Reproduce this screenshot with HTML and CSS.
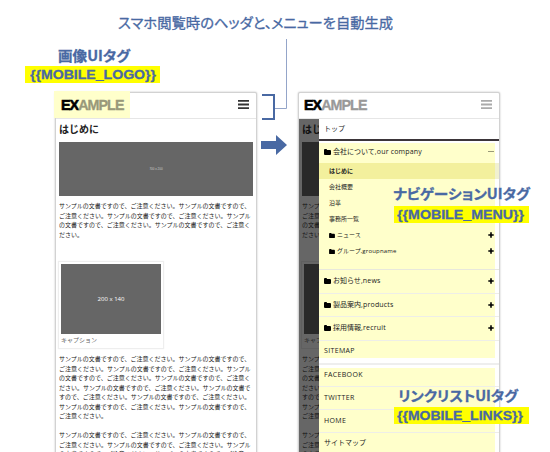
FILE: index.html
```html
<!DOCTYPE html>
<html lang="ja">
<head>
<meta charset="utf-8">
<title>スマホ閲覧時のヘッダとメニュー</title>
<link rel="stylesheet" href="styles.css">
</head>
<body>
<svg class="defs" width="0" height="0">
  <symbol id="folder" viewBox="0 0 14 12"><path d="M0 2Q0 0 2 0H4.500Q6 0 6 2H12Q14 2 14 4V10Q14 12 12 12H2Q0 12 0 10Z"/></symbol>
  <symbol id="plus" viewBox="0 0 6 6"><path d="M2.200 0.300H3.800V2.200H5.700V3.800H3.800V5.700H2.200V3.800H0.300V2.200H2.200Z"/></symbol>
  <symbol id="bars" viewBox="0 0 11 9"><path d="M0 0H11V1.800H0ZM0 3.600H11V5.400H0ZM0 7.200H11V9H0Z"/></symbol>
</svg>
<main class="stage">
  <section class="phone">
    <header class="bar">
      <div class="logo marked"><svg width="76" height="27"><text x="7" y="19" textLength="62.500" lengthAdjust="spacingAndGlyphs"><tspan class="ex">EX</tspan><tspan class="ample">AMPLE</tspan></text></svg></div>
      <svg class="bars"><use href="#bars"/></svg>
    </header>
    <article class="page">
      <h1>はじめに</h1>
      <div class="hero">700 x 200</div>
      <p class="intro">サンプルの文書ですので、ご注意ください。サンプルの文書ですので、<br>ご注意ください。サンプルの文書ですので、ご注意ください。サンプル<br>の文書ですので、ご注意ください。サンプルの文書ですので、ご注意く<br>ださい。</p>
      <figure><div class="thumb">200 x 140</div><figcaption>キャプション</figcaption></figure>
      <p>サンプルの文書ですので、ご注意ください。サンプルの文書ですので、<br>ご注意ください。サンプルの文書ですので、ご注意ください。サンプル<br>の文書ですので、ご注意ください。サンプルの文書ですので、ご注意く<br>ださい。サンプルの文書ですので、ご注意ください。サンプルの文書で<br>すので、ご注意ください。サンプルの文書ですので、ご注意ください。<br>サンプルの文書ですので、ご注意ください。サンプルの文書ですので、<br>ご注意ください。</p>
      <p>サンプルの文書ですので、ご注意ください。サンプルの文書ですので、<br>ご注意ください。サンプルの文書ですので、ご注意ください。サンプル<br>の文書ですので、ご注意ください。サンプルの文書ですので、ご注意く</p>
    </article>
  </section>

  <section class="phone open">
    <header class="bar">
      <div class="logo"><svg width="76" height="27"><text x="7" y="19" textLength="62.500" lengthAdjust="spacingAndGlyphs"><tspan class="ex">EX</tspan><tspan class="ample">AMPLE</tspan></text></svg></div>
      <svg class="bars"><use href="#bars"/></svg>
    </header>
    <div class="split">
      <article class="page">
        <h1>はじ</h1>
        <div class="hero"></div>
        <p class="intro">サンプ<br>ご注意<br>の文書<br>ださい</p>
        <figure><div class="thumb"></div><figcaption>キャプ</figcaption></figure>
        <p>サンプ<br>ご注意<br>の文書<br>ださい<br>すので<br>サンプ<br>ご注意</p>
        <p>サンプ<br>ご注意<br>の文書</p>
      </article>
      <nav class="menu">
        <div class="top">トップ</div>
        <div class="tagged">
          <div class="row first"><svg class="folder"><use href="#folder"/></svg><span>会社について<b>,our company</b></span><i class="minus"></i></div>
          <ul>
            <li class="active">はじめに</li>
            <li>会社概要</li>
            <li>沿革</li>
            <li>事務所一覧</li>
            <li><svg class="folder"><use href="#folder"/></svg><span>ニュース</span><svg class="plus"><use href="#plus"/></svg></li>
            <li><svg class="folder"><use href="#folder"/></svg><span>グループ<b>,groupname</b></span><svg class="plus"><use href="#plus"/></svg></li>
          </ul>
          <div class="row"><svg class="folder"><use href="#folder"/></svg><span>お知らせ<b>,news</b></span><svg class="plus"><use href="#plus"/></svg></div>
          <div class="row"><svg class="folder"><use href="#folder"/></svg><span>製品案内<b>,products</b></span><svg class="plus"><use href="#plus"/></svg></div>
          <div class="row"><svg class="folder"><use href="#folder"/></svg><span>採用情報<b>,recruit</b></span><svg class="plus"><use href="#plus"/></svg></div>
          <div class="row last caps">SITEMAP</div>
        </div>
        <div class="divider"></div>
        <div class="tagged links">
          <div class="row caps">FACEBOOK</div>
          <div class="row caps">TWITTER</div>
          <div class="row caps">HOME</div>
          <div class="row">サイトマップ</div>
        </div>
      </nav>
    </div>
  </section>

  <svg class="notes" width="550" height="452" viewBox="0 0 550 452">
    <path class="leader" d="M286.500 39V108.500H275"/>
    <path class="bracket" d="M262 95H274V119H262"/>
    <path class="arrow" d="M261 141H276V135L287 145L276 155V149H261Z"/>
    <path class="tag" d="M25 66H160V83H25ZM394 206H529V223H394ZM394 407H529V424H394Z"/>
    <g class="lead">
      <text x="118" y="28" textLength="154" lengthAdjust="spacingAndGlyphs">スマホ閲覧時のヘッダと、</text>
      <text x="271" y="28" textLength="122" lengthAdjust="spacingAndGlyphs">メニューを自動生成</text>
    </g>
    <g class="label">
      <text x="58" y="61" textLength="72" lengthAdjust="spacingAndGlyphs">画像UIタグ</text>
      <text x="393" y="199" textLength="137" lengthAdjust="spacingAndGlyphs">ナビゲーションUIタグ</text>
      <text x="398" y="401" textLength="120" lengthAdjust="spacingAndGlyphs">リンクリストUIタグ</text>
    </g>
    <g class="code">
      <text x="30" y="79" textLength="126" lengthAdjust="spacingAndGlyphs">{{MOBILE_LOGO}}</text>
      <text x="397" y="219" textLength="127" lengthAdjust="spacingAndGlyphs">{{MOBILE_MENU}}</text>
      <text x="397" y="420" textLength="126" lengthAdjust="spacingAndGlyphs">{{MOBILE_LINKS}}</text>
    </g>
  </svg>
</main>
</body>
</html>
```
FILE: styles.css
```css
* { box-sizing: border-box; margin: 0; padding: 0; }
body { background: #fff; overflow: hidden; font-family: "Noto Sans CJK JP", sans-serif; color: #222; }
.defs { display: block; height: 0; }
.stage { position: relative; width: 550px; height: 452px; overflow: hidden; display: flex; gap: 41px; padding: 92px 0 0 55px; }
.phone { width: 202px; height: 380px; flex: none; background: #fff; border: 1px solid #d2d2d2; border-radius: 2px; box-shadow: 0 0 2px #bbb; }
.bar { height: 26px; display: flex; justify-content: space-between; align-items: flex-start; border-bottom: 1px solid #e6e6e6; }
.logo { width: 76px; height: 27px; margin: -2px 0 0 -2px; }
.logo svg { display: block; }
.marked { background: #ffffcb; }
.logo text { font: bold 15px "Liberation Sans", sans-serif; letter-spacing: -1px; }
.ex { fill: #000; stroke: #000; stroke-width: .6px; }
.ample { fill: #999; stroke: #999; stroke-width: .3px; }
.marked .ample { fill: #99997a; stroke: #99997a; }
.bars { width: 11px; height: 9px; margin: 7px 7px 0 0; fill: #333; }
.open .bars { fill: #aaa; }
.page { padding: 0 3px; white-space: nowrap; font-size: 6px; line-height: 9.500px; }
.page h1 { font-size: 10px; line-height: 20px; height: 23px; }
.hero { width: 194px; height: 54px; background: #666; color: #ccc; font: 3px/54px "Liberation Sans", sans-serif; text-align: center; }
.page .intro { margin: 5px 0 22px; }
.page p { margin-bottom: 9.500px; }
figure { width: 106px; height: 88px; margin: 0 0 5px -1px; padding: 2px; border: 1px solid #eee; box-shadow: 0 0 1px #eee; }
.thumb { width: 100px; height: 70px; background: #666; color: #fff; font: 6px/70px "Open Sans", sans-serif; text-align: center; }
figcaption { color: #666; line-height: 11px; }
.split { display: flex; height: 352px; }
.open .page { width: 20px; flex: none; overflow: hidden; background: #666; color: #111; padding: 0 0 0 3px; }
.open .hero, .open .thumb { background: #292929; }
.open figure { border-color: #5f5f5f; box-shadow: none; }
.open figcaption { color: #292929; }
.menu { flex: 1; background: #fff; color: #222; font: 7px/16px "Open Sans", "Noto Sans CJK JP", sans-serif; white-space: nowrap; }
.menu b { font-weight: normal; letter-spacing: .18px; }
.caps { letter-spacing: .35px; }
.top { height: 22px; padding-left: 5px; line-height: 19px; border-bottom: 2px solid #3b3539; margin-bottom: 2px; }
.tagged { background: linear-gradient(90deg, #ffffcb 176px, #fff 176px); }
.row { height: 23.500px; display: flex; align-items: center; padding: 0 5px; border-bottom: 1.500px solid #eeeee8; }
.first { height: 20px; padding-bottom: 3px; border: 0; }
.row .plus, .row .minus, li .plus { margin-left: auto; }
.folder { width: 7px; height: 6px; margin-right: 2px; fill: #000; flex: none; }
.plus { width: 6px; height: 6px; fill: #000; }
.minus { width: 6px; height: 1px; background: #99997a; }
ul { list-style: none; height: 107px; border-bottom: 1px solid #e8e8dc; font-size: 6px; }
li { height: 16px; display: flex; align-items: center; padding: 0 5px 0 10px; }
.active { background: linear-gradient(90deg, #f3f09d 176px, #f1f1d0 176px); font-weight: bold; }
li .folder { width: 6px; height: 5px; }
.last { height: 17px; border: 0; padding-top: 3px; }
.divider { height: 10px; background: linear-gradient(#fff 5px, #eee 5px, #eee 7px, #fff 7px); }
.links .row { height: 23px; }
.links .row:first-child { height: 19px; padding-bottom: 3px; }
.links .row:last-child { padding-bottom: 1px; }
.notes { position: absolute; left: 0; top: 0; }
.leader { fill: none; stroke: #94a5c9; stroke-width: 1; }
.bracket { fill: none; stroke: #4969a3; stroke-width: 2; }
.arrow { fill: #4969a3; }
.tag { fill: #ff0; }
.lead, .label, .code { fill: #4969a3; stroke: #4969a3; }
.lead { font-size: 14px; stroke-width: .3px; font-feature-settings: "palt"; }
.label { font-size: 14px; font-weight: bold; stroke-width: .3px; font-feature-settings: "palt"; }
.code { font: bold 13px "Liberation Sans", sans-serif; stroke-width: .3px; }
```
